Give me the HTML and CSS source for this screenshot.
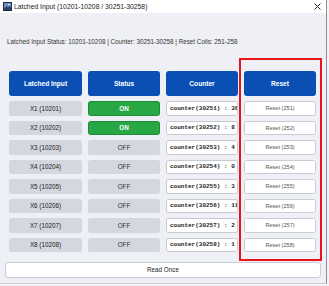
FILE: index.html
```html
<!DOCTYPE html>
<html>
<head>
<meta charset="utf-8">
<link rel="stylesheet" href="styles.css">
</head>
<body>
<div class="window">
  <div class="titlebar">
    <svg class="appicon" width="9" height="9" viewBox="0 0 9 9">
      <rect x="0" y="0" width="9" height="9" fill="#1b2a4a"/>
      <rect x="1" y="1" width="7" height="7" fill="#6f8fc0"/>
      <path d="M1 7 L3.5 4 L5 5.5 L6.5 3.5 L8 6 L8 8 L1 8 Z" fill="#2c3e63"/>
      <circle cx="6" cy="2.6" r="0.9" fill="#e8edf5"/>
    </svg>
    <span class="title">Latched Input (10201-10208 / 30251-30258)</span>
    <svg class="close" width="7" height="7" viewBox="0 0 7 7">
      <path d="M0.5 0.5 L6.5 6.5 M6.5 0.5 L0.5 6.5" stroke="#222" stroke-width="1"/>
    </svg>
  </div>
  <div class="content">
    <div class="statusline">Latched Input Status: 10201-10208 | Counter: 30251-30258 | Reset Coils: 251-258</div>
    <div class="grid">
      <div class="hdr">Latched Input</div>
      <div class="hdr">Status</div>
      <div class="hdr">Counter</div>
      <div class="hdr">Reset</div>

      <div class="cell name">X1 (10201)</div>
      <div class="cell on">ON</div>
      <div class="cell counter">counter(30251) : 36</div>
      <div class="cell reset">Reset (251)</div>

      <div class="cell name">X2 (10202)</div>
      <div class="cell on">ON</div>
      <div class="cell counter">counter(30252) : 8</div>
      <div class="cell reset">Reset (252)</div>

      <div class="cell name">X3 (10203)</div>
      <div class="cell off">OFF</div>
      <div class="cell counter">counter(30253) : 4</div>
      <div class="cell reset">Reset (253)</div>

      <div class="cell name">X4 (10204)</div>
      <div class="cell off">OFF</div>
      <div class="cell counter">counter(30254) : 0</div>
      <div class="cell reset">Reset (254)</div>

      <div class="cell name">X5 (10205)</div>
      <div class="cell off">OFF</div>
      <div class="cell counter">counter(30255) : 3</div>
      <div class="cell reset">Reset (255)</div>

      <div class="cell name">X6 (10206)</div>
      <div class="cell off">OFF</div>
      <div class="cell counter">counter(30256) : 11</div>
      <div class="cell reset">Reset (256)</div>

      <div class="cell name">X7 (10207)</div>
      <div class="cell off">OFF</div>
      <div class="cell counter">counter(30257) : 2</div>
      <div class="cell reset">Reset (257)</div>

      <div class="cell name">X8 (10208)</div>
      <div class="cell off">OFF</div>
      <div class="cell counter">counter(30258) : 1</div>
      <div class="cell reset">Reset (258)</div>
    </div>
    <div class="readonce">Read Once</div>
  </div>
  <div class="highlight"></div>
</div>
</body>
</html>
```
FILE: styles.css
```css
html, body {
  margin: 0;
  padding: 0;
  background: #f4f4f6;
}
body {
  font-family: "Liberation Sans", Arial, sans-serif;
  font-size: 6.5px;
  color: #333;
}
.window {
  position: relative;
  width: 326px;
  height: 283px;
  background: #eff0f5;
  border-right: 1px solid #8e8e8e;
  border-bottom: 1px solid #c9cbd1;
  overflow: hidden;
}
.titlebar {
  height: 13px;
  background: #ffffff;
  display: flex;
  align-items: center;
  padding-left: 3px;
  padding-right: 5px;
}
.appicon {
  display: block;
  margin-right: 2px;
}
.title {
  flex: 1;
  font-size: 6.8px;
  color: #222;
}
.close {
  display: block;
}
.content {
  padding: 25px 5px 0 5px;
}
.statusline {
  padding-left: 2px;
  line-height: 8px;
  font-size: 6.3px;
  color: #333;
}
.grid {
  display: grid;
  grid-template-columns: 73px 72px 72px 72px;
  grid-template-rows: 25px;
  grid-auto-rows: 14.5px;
  column-gap: 6px;
  row-gap: 5px;
  margin-top: 25px;
  padding-left: 4px;
}
.hdr {
  background: #0a50b4;
  color: #fff;
  font-weight: bold;
  font-size: 6.6px;
  border-radius: 3px;
  display: flex;
  align-items: center;
  justify-content: center;
}
.cell {
  border-radius: 2.5px;
  display: flex;
  align-items: center;
  justify-content: center;
  box-sizing: border-box;
  font-size: 6.3px;
}
.name {
  background: #d4d7df;
  color: #222;
}
.on {
  background: #28a745;
  border: 1px solid #1f8a38;
  color: #fff;
  font-weight: bold;
}
.off {
  background: #d4d7df;
  color: #333;
}
.counter {
  background: #fff;
  border: 1px solid #c5c9d1;
  justify-content: flex-start;
  padding-left: 3px;
  font-family: "Liberation Mono", "Courier New", monospace;
  font-weight: bold;
  font-size: 6px;
  color: #222;
  white-space: nowrap;
  overflow: hidden;
}
.reset {
  background: #fff;
  border: 1px solid #c8ccd4;
  color: #555;
  font-size: 5.6px;
}
.readonce {
  margin-top: 9.5px;
  height: 16px;
  width: 316px;
  box-sizing: border-box;
  background: #fff;
  border: 1px solid #c8ccd4;
  border-radius: 3px;
  display: flex;
  align-items: center;
  justify-content: center;
  font-size: 6.3px;
  color: #222;
}
.highlight {
  position: absolute;
  left: 239px;
  top: 58px;
  width: 83px;
  height: 203px;
  box-sizing: border-box;
  border: 2px solid #e8141b;
}
```
